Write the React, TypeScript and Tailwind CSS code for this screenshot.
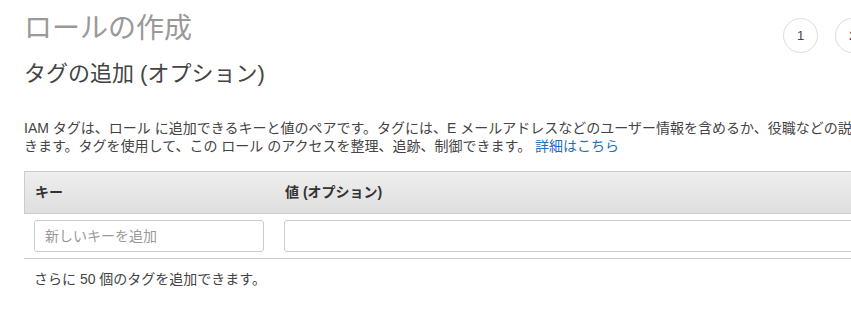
import React from "react";

const FONT = { fontFamily: '"Liberation Sans", "Noto Sans CJK JP", sans-serif' };

function StepCircle({ n }: { n: number }) {
  return (
    <div className="w-[35px] h-[35px] shrink-0 rounded-full border border-[#dddddd] bg-white flex items-center justify-center text-[13px] text-[#444]">
      {n}
    </div>
  );
}

export default function App() {
  return (
    <div className="w-[851px] h-[309px] overflow-hidden bg-white" style={FONT}>
      <div className="w-[1200px] pl-[24px]">
        {/* Title + steps */}
        <div className="flex items-start h-[53px]">
          <h1 className="w-[759px] pt-[12px] text-[28px] leading-[34px] text-[#999999]">ロールの作成</h1>
          <div className="flex gap-[17px] pt-[18px]">
            <StepCircle n={1} />
            <StepCircle n={2} />
            <StepCircle n={3} />
          </div>
        </div>

        <h2 className="mt-[7px] text-[22px] leading-[28px] text-[#444444]">タグの追加 (オプション)</h2>

        <p className="mt-[31px] text-[14px] leading-[18px] text-[#444444] whitespace-nowrap">
          IAM タグは、ロール に追加できるキーと値のペアです。タグには、E メールアドレスなどのユーザー情報を含めるか、役職などの説明的な情報を含めることがで
          <br />
          きます。タグを使用して、この ロール のアクセスを整理、追跡、制御できます。{" "}
          <a className="text-[#1f6fbf]">詳細はこちら</a>
        </p>

        {/* Tag table */}
        <div className="mt-[16px]">
          <div className="flex h-[43px] items-center border border-r-0 border-[#cccccc] bg-gradient-to-b from-[#eeeeee] to-[#dfdfdf] text-[14px] font-bold text-[#333333]">
            <div className="w-[260px] pl-[10px]">キー</div>
            <div>値 (オプション)</div>
          </div>
          <div className="flex items-center gap-[20px] h-[45px] border-b border-[#cccccc] pl-[10px]">
            <input
              placeholder="新しいキーを追加"
              className="w-[230px] h-[32px] rounded-[3px] border border-[#cccccc] px-[10px] text-[14px] text-[#444] placeholder:text-[#999999] outline-none"
              style={FONT}
            />
            <input
              className="w-[600px] h-[32px] rounded-[3px] border border-[#cccccc] px-[10px] text-[14px] outline-none"
              style={FONT}
            />
          </div>
          <div className="pl-[10px] pt-[11px] text-[14px] leading-[18px] text-[#444444]">
            さらに 50 個のタグを追加できます。
          </div>
        </div>
      </div>
    </div>
  );
}
